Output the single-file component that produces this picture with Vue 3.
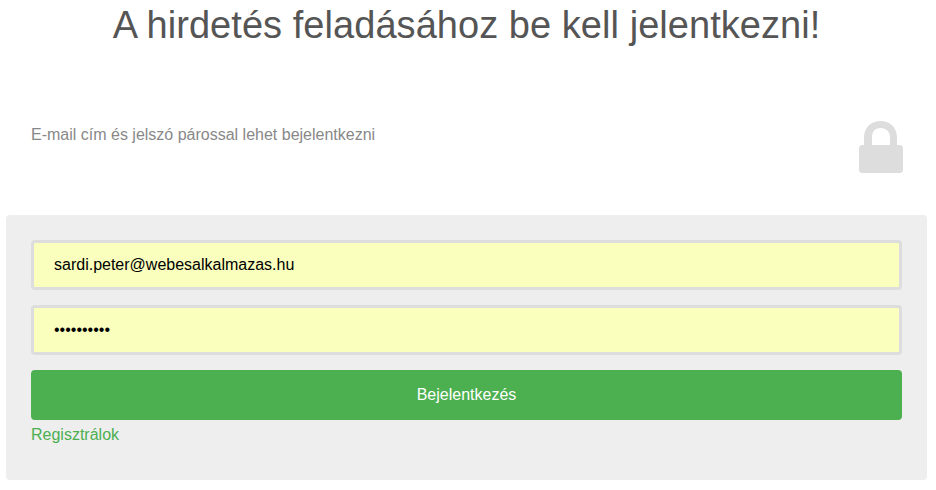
<script setup>
const email = 'sardi.peter@webesalkalmazas.hu'
const password = 'jelszo1234'
</script>

<template>
  <div class="page">
    <h1 class="title">A hirdetés feladásához be kell jelentkezni!</h1>
    <div class="intro">
      <p class="hint">E-mail cím és jelszó párossal lehet bejelentkezni</p>
      <svg class="lock" width="44" height="52" viewBox="0 0 44 52" aria-hidden="true">
        <path fill="#ddd" d="M5 26V16.5C5 6.5 12 0 21.5 0S38 6.5 38 16.5V26H31V16.5C31 10.5 27 7 21.5 7S13 10.5 13 16.5V26H5Z" />
        <rect x="0" y="24" width="44" height="28" rx="3.5" fill="#ddd" />
      </svg>
    </div>
    <form class="panel" @submit.prevent>
      <input class="field" type="text" :value="email" />
      <input class="field" type="password" :value="password" />
      <button class="submit" type="submit">Bejelentkezés</button>
      <a class="link" href="#">Regisztrálok</a>
    </form>
  </div>
</template>

<style scoped>
.page {
  box-sizing: border-box;
  width: 936px;
  height: 490px;
  padding: 0 9px 10px 6px;
  font-family: "Liberation Sans", Arial, sans-serif;
  overflow: hidden;
}
.title {
  margin: 0;
  height: 50px;
  font-size: 38px;
  font-weight: 400;
  line-height: 50px;
  letter-spacing: 0.05px;
  color: #555;
  text-align: center;
}
.intro {
  display: flex;
  justify-content: space-between;
  align-items: flex-start;
  height: 165px;
  padding: 0 24px 0 25px;
  box-sizing: border-box;
}
.hint {
  margin: 76px 0 0;
  font-size: 16px;
  line-height: 18px;
  color: #888;
}
.lock {
  margin-top: 71px;
}
.panel {
  box-sizing: border-box;
  display: flex;
  flex-direction: column;
  height: 265px;
  padding: 25px;
  background: #eee;
  border-radius: 4px;
}
.field {
  box-sizing: border-box;
  height: 50px;
  margin-bottom: 15px;
  padding: 0 20px;
  border: 3px solid #ddd;
  border-radius: 4px;
  outline: none;
  background: #faffbd;
  font-family: inherit;
  font-size: 16px;
  color: #000;
}
.submit {
  height: 50px;
  border: 0;
  border-radius: 4px;
  background: #4caf50;
  color: #fff;
  font-family: inherit;
  font-size: 16px;
}
.link {
  margin-top: 6px;
  font-size: 16px;
  line-height: 18px;
  color: #4caf50;
  text-decoration: none;
}
</style>
